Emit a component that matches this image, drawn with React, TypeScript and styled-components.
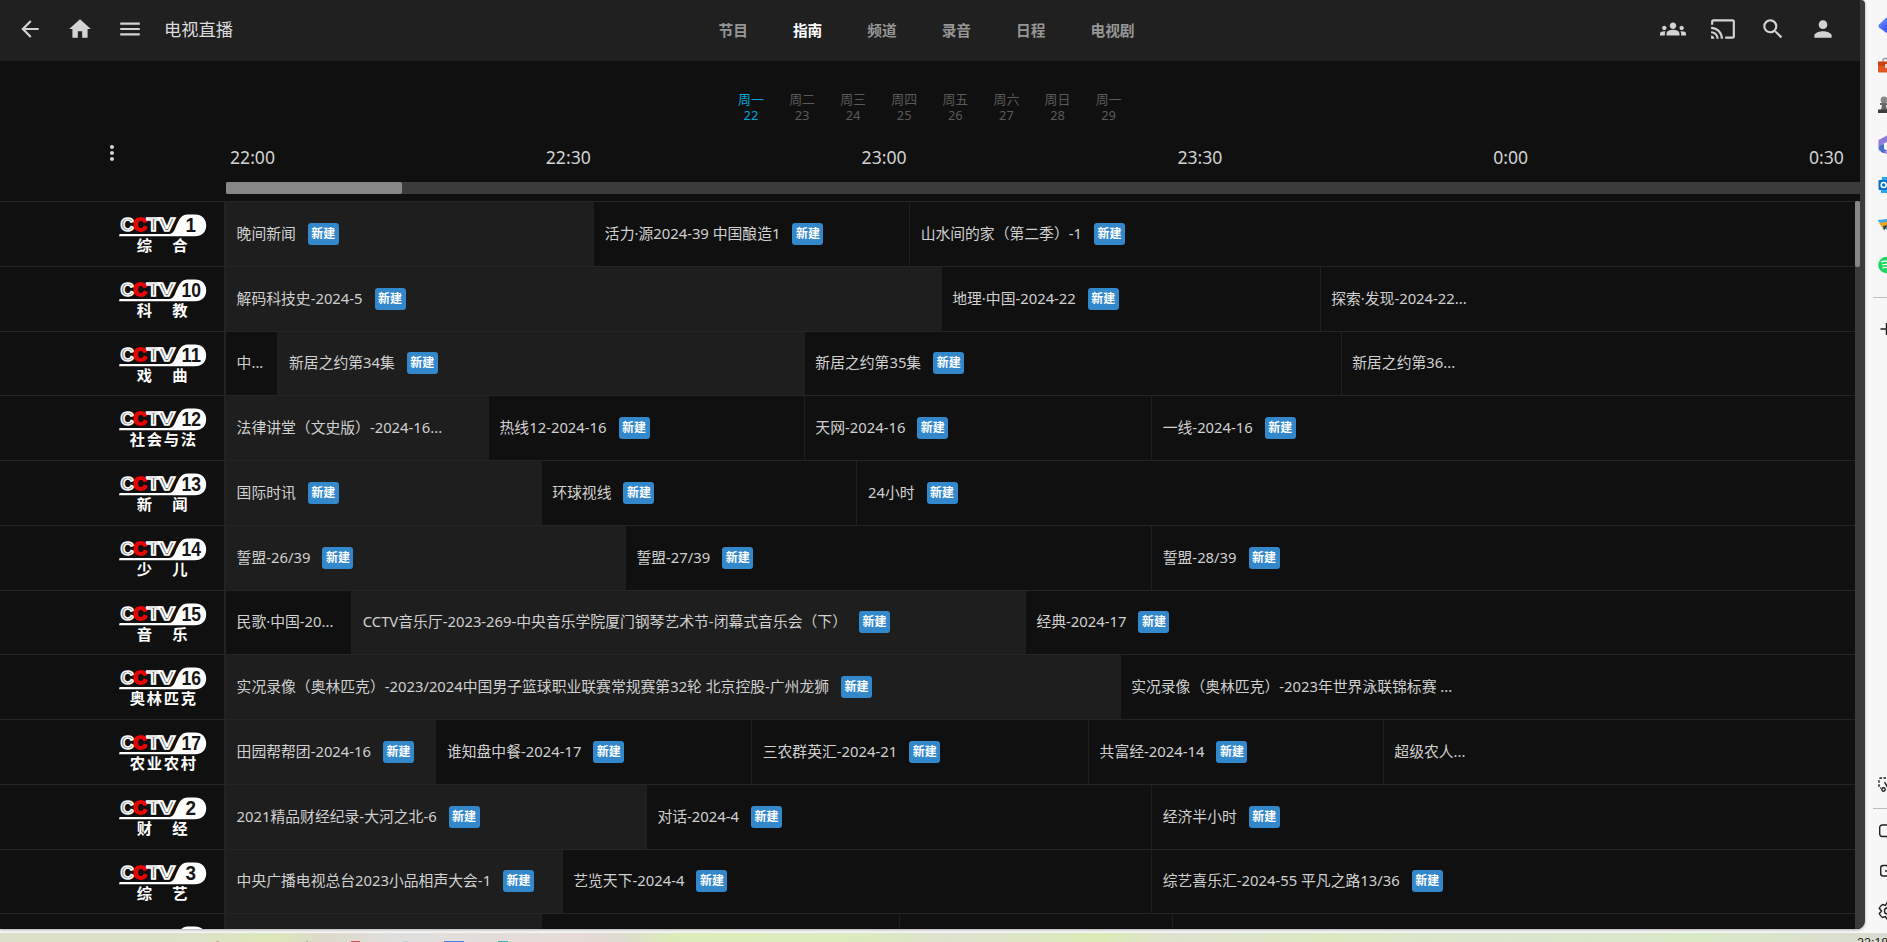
import React from 'react';
import styled, { createGlobalStyle } from 'styled-components';
import {
  MdArrowBack,
  MdCast,
  MdGroups,
  MdHome,
  MdMenu,
  MdMoreVert,
  MdPerson,
  MdSearch,
} from 'react-icons/md';

const PX_PER_MINUTE = 10.527;

const GlobalStyle = createGlobalStyle`
  * { box-sizing: border-box; }
  html, body { margin: 0; background: #f7f7f7; overflow: hidden; }
  body {
    font-family: "Noto Sans", "Noto Sans CJK SC", sans-serif;
    color: #cfcfcf;
  }
`;

const Desktop = styled.div`
  width: 1887px;
  height: 942px;
  display: flex;
  flex-direction: column;
  overflow: hidden;
  background: #f7f7f7;
`;

const Browser = styled.div`
  display: flex;
  height: 933px;
  flex: none;
`;

const Frame = styled.div`
  width: 1865px;
  height: 929px;
  padding-right: 5px;
  background: #3b3b3b;
  border-radius: 0 4px 8px 0;
  box-shadow: 0 1px 3px rgba(0, 0, 0, 0.3);
  overflow: hidden;
  flex: none;
`;

const Page = styled.div`
  width: 1860px;
  height: 929px;
  display: flex;
  flex-direction: column;
  background: #101010;
`;

const Header = styled.header`
  height: 61px;
  flex: none;
  display: grid;
  grid-template-columns: 696px 1fr 212px;
  background: #202020;
`;

const HeaderGroup = styled.div<{ $inset?: number }>`
  display: flex;
  align-items: center;
  height: 57px;
  padding-left: ${(p) => p.$inset ?? 0}px;
`;

const IconButton = styled.button<{ $size?: number }>`
  width: 50px;
  height: 50px;
  padding: 0;
  border: 0;
  background: none;
  color: #d3d3d3;
  display: flex;
  align-items: center;
  justify-content: center;
  flex: none;
  svg {
    width: ${(p) => p.$size ?? 26}px;
    height: ${(p) => p.$size ?? 26}px;
    display: block;
  }
`;

const Title = styled.h1`
  margin: 2px 0 0 9px;
  font-size: 17.3px;
  line-height: 24px;
  font-weight: 400;
  color: #dcdcdc;
`;

const Nav = styled.nav`
  display: flex;
  align-items: center;
  height: 60px;
`;

const Tab = styled.a<{ $active?: boolean }>`
  padding: 0 22.5px;
  font-size: 14.7px;
  line-height: 20px;
  font-weight: 700;
  white-space: nowrap;
  color: ${(p) => (p.$active ? '#fff' : '#969696')};
`;

const Days = styled.div`
  height: 81px;
  padding: 30px 0 0 725.4px;
  display: flex;
  flex: none;
`;

const Day = styled.div<{ $active?: boolean }>`
  width: 51.1px;
  display: flex;
  flex-direction: column;
  align-items: center;
  font-size: 12.9px;
  line-height: 16px;
  color: ${(p) => (p.$active ? '#00a4dc' : '#5a5a5a')};
`;

const TimeHeader = styled.div`
  height: 40px;
  flex: none;
  display: flex;
  overflow: hidden;
`;

const OptionsCell = styled.div`
  width: 225.5px;
  flex: none;
  padding: 0 0 0 87.4px;
  margin-top: -14px;
`;

const TimeSlot = styled.div`
  width: ${30 * PX_PER_MINUTE}px;
  flex: none;
  padding-left: 4.5px;
  font-size: 17.6px;
  line-height: 30px;
  color: #d3d3d3;
`;

const HorizontalTrack = styled.div`
  height: 12px;
  margin: 0 0 7px 226px;
  flex: none;
  background: #3b3b3b;
`;

const HorizontalThumb = styled.div`
  width: 176px;
  height: 12px;
  border-radius: 2px;
  background: #888;
`;

const GuideArea = styled.div`
  display: flex;
  flex: 1;
  min-height: 0;
`;

const Channels = styled.div`
  width: 1855px;
  overflow: hidden;
`;

const VerticalTrack = styled.div`
  width: 5px;
  background: #3b3b3b;
`;

const VerticalThumb = styled.div`
  height: 66px;
  border-radius: 2px;
  background: #888;
`;

const Row = styled.div`
  height: 64.75px;
  display: flex;
  border-top: 1px solid #252525;
`;

const ChannelCell = styled.div`
  width: 226px;
  flex: none;
  padding: 11px 0 0 118px;
  border-right: 2px solid #232323;
  svg { display: block; }
`;

const Program = styled.div<{ $minutes?: number; $live?: boolean; $first?: boolean }>`
  width: ${(p) =>
    p.$minutes ? `${p.$minutes * PX_PER_MINUTE - (p.$first ? 1.2 : 0)}px` : 'auto'};
  flex: ${(p) => (p.$minutes ? 'none' : '1')};
  display: flex;
  align-items: center;
  gap: 12px;
  min-width: 0;
  padding: 0 0 2px 10.6px;
  border-left: ${(p) => (p.$first ? '0' : '1px solid #1f1f1f')};
  background: ${(p) => (p.$live ? '#1e1e1e' : 'transparent')};
  white-space: nowrap;
  overflow: hidden;
`;

const ProgramName = styled.span`
  font-size: 14.82px;
  line-height: 22px;
  color: #d0d0d0;
`;

const NewBadge = styled.span`
  width: 31px;
  height: 22px;
  border-radius: 3px;
  background: #3388cc;
  color: #fff;
  font-size: 12px;
  line-height: 22px;
  font-weight: 700;
  text-align: center;
  margin-top: 2px;
  flex: none;
`;

const Sidebar = styled.aside`
  width: 22px;
  height: 931px;
  display: flex;
  flex-direction: column;
  padding-top: 6px;
  overflow: hidden;
`;

const SideSlot = styled.div<{ $tall?: number }>`
  height: ${(p) => p.$tall ?? 39.8}px;
  flex: none;
  padding-left: 13px;
  display: flex;
  align-items: center;
  svg { flex: none; display: block; }
`;

const SideRule = styled.div<{ $gap: number }>`
  height: 1px;
  flex: none;
  margin: ${(p) => p.$gap}px 0 ${(p) => p.$gap}px 8px;
  background: #bdbdbd;
`;

const SideSpacer = styled.div`
  flex: 1;
`;

const Taskbar = styled.footer`
  height: 9px;
  flex: none;
  display: flex;
  align-items: flex-end;
  overflow: hidden;
  background: linear-gradient(
    90deg,
    #dce0c8 0, #dbe2c6 190px, #dce8b8 275px, #ddd9ca 320px, #e0dfdd 400px,
    #e4dcd8 530px, #e8dad5 580px, #dedbcf 620px, #dbecb9 670px, #dcebbd 860px,
    #dde2d0 950px, #dcebb6 1100px, #dde2d0 1175px, #dce9c0 1330px,
    #dbe5ce 1480px, #d8eac5 1700px, #dadfce 1830px, #d9dbd0 1887px
  );
`;

const TaskMark = styled.i<{ $gap: number; $w: number; $color: string }>`
  width: ${(p) => p.$w}px;
  height: 1px;
  margin-left: ${(p) => p.$gap}px;
  flex: none;
  background: ${(p) => p.$color};
`;

const Clock = styled.span`
  width: 30px;
  height: 6px;
  margin-left: auto;
  overflow: visible;
  white-space: nowrap;
  font: 12.5px/14px "Liberation Sans", sans-serif;
  color: #222;
`;

const CaptionText = styled.text`
  font: 700 15.3px "Noto Sans CJK SC", sans-serif;
  fill: #fff;
`;

const LetterText = styled.text<{ $red?: boolean }>`
  font: 700 18.6px "Liberation Sans", sans-serif;
  fill: ${(p) => (p.$red ? '#a01010' : '#6a6a6a')};
  stroke: ${(p) => (p.$red ? '#f00' : '#fff')};
  stroke-width: 1.5px;
`;

const NumberText = styled.text`
  font: 700 20px "Liberation Sans Narrow", "Liberation Sans", sans-serif;
  fill: #151515;
`;

function ChannelLogo({ num, name }: { num?: string; name?: string }) {
  const centers = name?.length === 2 ? [26.5, 62] : [19.5, 36.5, 53.5, 70.5];
  return (
    <svg width="92" height="44" viewBox="0 0 92 44">
      <path
        d="M1 23.2 L1.6 21 H51.5 C56.5 20 56.8 15.5 59.3 10.5 C61.5 5.5 64 1.5 69.5 1.5 H77 C84 1.5 88.2 6 88.2 12.4 C88.2 18.6 84 23.2 77 23.2 Z"
        fill="#fff"
      />
      {num && (
        <>
          <LetterText x="2.5" y="18" textLength="13.5" lengthAdjust="spacingAndGlyphs">C</LetterText>
          <LetterText x="28.5" y="18" textLength="14" lengthAdjust="spacingAndGlyphs">T</LetterText>
          <LetterText x="40.5" y="18" textLength="16.5" lengthAdjust="spacingAndGlyphs">V</LetterText>
          <LetterText $red x="15.3" y="18" textLength="13.5" lengthAdjust="spacingAndGlyphs">C</LetterText>
          <NumberText
            x={num.length === 2 ? 63.5 : 67.5}
            y="19.3"
            textLength={num.length === 2 ? 19.5 : 10.5}
            lengthAdjust="spacingAndGlyphs"
          >
            {num}
          </NumberText>
        </>
      )}
      {name?.split('').map((ch, i) => (
        <CaptionText key={i} x={centers[i]} y="37.8" textAnchor="middle">
          {ch}
        </CaptionText>
      ))}
    </svg>
  );
}

type Show = { name?: string; min?: number; live?: boolean; plain?: boolean };
type Channel = { num?: string; label?: string; shows: Show[] };

const channels: Channel[] = [
  { num: '1', label: '综合', shows: [
    { name: '晚间新闻', min: 35, live: true },
    { name: '活力·源2024-39 中国酿造1', min: 30 },
    { name: '山水间的家（第二季）-1' },
  ] },
  { num: '10', label: '科教', shows: [
    { name: '解码科技史-2024-5', min: 68, live: true },
    { name: '地理·中国-2024-22', min: 36 },
    { name: '探索·发现-2024-22...', plain: true },
  ] },
  { num: '11', label: '戏曲', shows: [
    { name: '中...', min: 5, plain: true },
    { name: '新居之约第34集', min: 50, live: true },
    { name: '新居之约第35集', min: 51 },
    { name: '新居之约第36...', plain: true },
  ] },
  { num: '12', label: '社会与法', shows: [
    { name: '法律讲堂（文史版）-2024-16...', min: 25, live: true, plain: true },
    { name: '热线12-2024-16', min: 30 },
    { name: '天网-2024-16', min: 33 },
    { name: '一线-2024-16' },
  ] },
  { num: '13', label: '新闻', shows: [
    { name: '国际时讯', min: 30, live: true },
    { name: '环球视线', min: 30 },
    { name: '24小时' },
  ] },
  { num: '14', label: '少儿', shows: [
    { name: '誓盟-26/39', min: 38, live: true },
    { name: '誓盟-27/39', min: 50 },
    { name: '誓盟-28/39' },
  ] },
  { num: '15', label: '音乐', shows: [
    { name: '民歌·中国-20...', min: 12, plain: true },
    { name: 'CCTV音乐厅-2023-269-中央音乐学院厦门钢琴艺术节-闭幕式音乐会（下）', min: 64, live: true },
    { name: '经典-2024-17' },
  ] },
  { num: '16', label: '奥林匹克', shows: [
    { name: '实况录像（奥林匹克）-2023/2024中国男子篮球职业联赛常规赛第32轮 北京控股-广州龙狮', min: 85, live: true },
    { name: '实况录像（奥林匹克）-2023年世界泳联锦标赛 ...', plain: true },
  ] },
  { num: '17', label: '农业农村', shows: [
    { name: '田园帮帮团-2024-16', min: 20, live: true },
    { name: '谁知盘中餐-2024-17', min: 30 },
    { name: '三农群英汇-2024-21', min: 32 },
    { name: '共富经-2024-14', min: 28 },
    { name: '超级农人...', plain: true },
  ] },
  { num: '2', label: '财经', shows: [
    { name: '2021精品财经纪录-大河之北-6', min: 40, live: true },
    { name: '对话-2024-4', min: 48 },
    { name: '经济半小时' },
  ] },
  { num: '3', label: '综艺', shows: [
    { name: '中央广播电视总台2023小品相声大会-1', min: 32, live: true },
    { name: '艺览天下-2024-4', min: 56 },
    { name: '综艺喜乐汇-2024-55 平凡之路13/36' },
  ] },
  { shows: [
    { min: 30, live: true, plain: true },
    { min: 34, plain: true },
    { min: 26, plain: true },
    { plain: true },
  ] },
];

const days = [
  ['周一', '22'], ['周二', '23'], ['周三', '24'], ['周四', '25'],
  ['周五', '26'], ['周六', '27'], ['周日', '28'], ['周一', '29'],
];

const line = { fill: 'none', stroke: '#1f1f1f', strokeWidth: 1.4 };

function BrowserSidebar() {
  return (
    <Sidebar>
      <SideSlot>
        <svg width="22" height="22" viewBox="0 0 22 22">
          <defs>
            <linearGradient id="tag" x1="0" y1="0" x2="1" y2="1">
              <stop offset="0" stopColor="#6fb3fb" />
              <stop offset=".5" stopColor="#4560f5" />
            </linearGradient>
          </defs>
          <path d="M1 9.5 11 0 21 11 10 19 1 12.5Q0 11 1 9.5Z" fill="url(#tag)" />
        </svg>
      </SideSlot>
      <SideSlot>
        <svg width="22" height="18" viewBox="0 0 22 18">
          <path d="M5 5V3Q5 1.5 7 1.5H14" fill="none" stroke="#999" strokeWidth="1.3" />
          <rect x="-1" y="4.5" width="23" height="5" rx="1" fill="#c84310" />
          <rect x="0" y="9" width="22" height="6.5" rx="1" fill="#e3561f" />
          <rect x="7" y="7" width="4" height="4" rx="1" fill="#ddd" />
        </svg>
      </SideSlot>
      <SideSlot>
        <svg width="22" height="18" viewBox="0 0 22 18">
          <circle cx="6" cy="4" r="3.4" fill="#888" />
          <path d="M2 7H11V9H8L9 14H3L4 9H2Z" fill="#666" />
          <rect x="-1" y="13.5" width="14" height="3.5" rx="1.5" fill="#3d3d3d" />
        </svg>
      </SideSlot>
      <SideSlot>
        <svg width="22" height="20" viewBox="0 0 22 20">
          <path d="M0.5 5 9 0.5V7L5 9V18L.5 15Z" fill="#8e7bdc" />
          <path d="M.5 12 6 9V14L10 16V19L4 17.5Z" fill="#4071cc" />
          <path d="M6 17 12 13V20Z" fill="#c58aee" />
        </svg>
      </SideSlot>
      <SideSlot>
        <svg width="22" height="18" viewBox="0 0 22 18">
          <path d="M4 1H20V17H3V9Z" fill="#28a8ea" />
          <rect x="0.5" y="4" width="12" height="10" rx="1" fill="#0873cf" />
          <circle cx="5.7" cy="9" r="2.5" fill="none" stroke="#fff" strokeWidth="1.5" />
        </svg>
      </SideSlot>
      <SideSlot>
        <svg width="22" height="16" viewBox="0 0 22 16">
          <path d="M-1 3 20 1 11 15Z" fill="#35a7ec" />
          <path d="M1 6 18 3 6 13Z" fill="#f3a41d" />
          <path d="M5 9 10 8 6 13.5Z" fill="#23466a" />
        </svg>
      </SideSlot>
      <SideSlot>
        <svg width="20" height="18" viewBox="0 0 20 18">
          <circle cx="8.5" cy="9" r="8.3" fill="#1ed760" />
          <path d="M3 6Q9 4 14 7M4 9Q9 7.5 13 10M4.5 12Q9 10.5 12 13" fill="none" stroke="#fff" strokeWidth="1.3" />
        </svg>
      </SideSlot>
      <SideRule $gap={12} />
      <SideSlot>
        <svg width="22" height="16" viewBox="0 0 22 16">
          <path d="M2.5 8H15M8.5 2V14" {...line} />
        </svg>
      </SideSlot>
      <SideSpacer />
      <SideSlot $tall={40}>
        <svg width="22" height="16" viewBox="0 0 22 16">
          <path d="M12 1H3Q1 1 1 3V9Q1 11 3 11" {...line} strokeDasharray="2.5 1.5" />
          <path d="M6.5 5 10 11" {...line} />
          <circle cx="5.5" cy="12.5" r="1.7" {...line} />
        </svg>
      </SideSlot>
      <SideRule $gap={2.5} />
      <SideSlot $tall={40}>
        <svg width="22" height="14" viewBox="0 0 22 14">
          <rect x="1.7" y="1" width="16" height="11.5" rx="2.5" {...line} />
        </svg>
      </SideSlot>
      <SideSlot $tall={40}>
        <svg width="22" height="14" viewBox="0 0 22 14">
          <path d="M14 1.5H5.2Q2.7 1.5 2.7 4V9.5Q2.7 12 5.2 12H14" {...line} />
          <path d="M7 7H12" {...line} />
        </svg>
      </SideSlot>
      <SideSlot $tall={40}>
        <svg width="22" height="20" viewBox="0 0 22 20">
          <path
            d="M9 1.5 7.5 4.5 4.5 3.5Q2.5 5 1.3 7.3L3.5 10 1.3 12.7Q2.5 15 4.5 16.5L7.5 15.5 9 18.5"
            {...line}
          />
          <circle cx="9.5" cy="10" r="3" {...line} />
        </svg>
      </SideSlot>
    </Sidebar>
  );
}

export default function App() {
  return (
    <Desktop>
      <GlobalStyle />
      <Browser>
        <Frame>
          <Page>
            <Header>
              <HeaderGroup $inset={5}>
                <IconButton><MdArrowBack /></IconButton>
                <IconButton><MdHome /></IconButton>
                <IconButton><MdMenu /></IconButton>
                <Title>电视直播</Title>
              </HeaderGroup>
              <Nav>
                {['节目', '指南', '频道', '录音', '日程', '电视剧'].map((t) => (
                  <Tab key={t} $active={t === '指南'}>{t}</Tab>
                ))}
              </Nav>
              <HeaderGroup $inset={0.4}>
                <IconButton><MdGroups /></IconButton>
                <IconButton><MdCast /></IconButton>
                <IconButton><MdSearch /></IconButton>
                <IconButton><MdPerson /></IconButton>
              </HeaderGroup>
            </Header>
            <Days>
              {days.map(([d, n]) => (
                <Day key={n} $active={n === '22'}>
                  <span>{d}</span>
                  <span>{n}</span>
                </Day>
              ))}
            </Days>
            <TimeHeader>
              <OptionsCell>
                <IconButton $size={24}><MdMoreVert /></IconButton>
              </OptionsCell>
              {['22:00', '22:30', '23:00', '23:30', '0:00', '0:30'].map((t) => (
                <TimeSlot key={t}>{t}</TimeSlot>
              ))}
            </TimeHeader>
            <HorizontalTrack><HorizontalThumb /></HorizontalTrack>
            <GuideArea>
              <Channels>
                {channels.map((c, row) => (
                  <Row key={row}>
                    <ChannelCell>
                      <ChannelLogo num={c.num} name={c.label} />
                    </ChannelCell>
                    {c.shows.map((s, i) => (
                      <Program key={i} $minutes={s.min} $live={s.live} $first={i === 0}>
                        {s.name && <ProgramName>{s.name}</ProgramName>}
                        {!s.plain && <NewBadge>新建</NewBadge>}
                      </Program>
                    ))}
                  </Row>
                ))}
              </Channels>
              <VerticalTrack><VerticalThumb /></VerticalTrack>
            </GuideArea>
          </Page>
        </Frame>
        <BrowserSidebar />
      </Browser>
      <Taskbar>
        <TaskMark $gap={216} $w={3} $color="#c9a79a" />
        <TaskMark $gap={87} $w={2} $color="#a9b3ae" />
        <TaskMark $gap={43} $w={9} $color="#d8504a" />
        <TaskMark $gap={43} $w={5} $color="#bcd0d8" />
        <TaskMark $gap={36} $w={20} $color="#4a80e8" />
        <TaskMark $gap={34} $w={10} $color="#3bb8c8" />
        <Clock>22:18</Clock>
      </Taskbar>
    </Desktop>
  );
}
